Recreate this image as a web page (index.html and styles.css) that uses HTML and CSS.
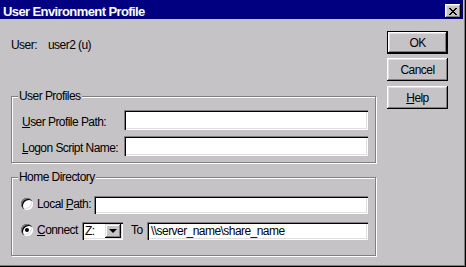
FILE: index.html
```html
<!DOCTYPE html>
<html>
<head>
<meta charset="utf-8">
<link rel="stylesheet" href="styles.css">
</head>
<body>
<div class="dialog">
  <div class="titlebar">
    <span class="title">User Environment Profile</span>
    <span class="close">
      <svg width="8" height="7" viewBox="0 0 8 7" shape-rendering="crispEdges"><path d="M0 0h2v1h-2zM6 0h2v1h-2zM1 1h2v1h-2zM5 1h2v1h-2zM2 2h4v1h-4zM3 3h2v1h-2zM2 4h4v1h-4zM1 5h2v1h-2zM5 5h2v1h-2zM0 6h2v1h-2zM6 6h2v1h-2z" fill="#000"/></svg>
    </span>
  </div>
  <div class="content">
    <div class="main">
      <div class="user-row"><span class="user-label">User:</span><span>user2 (u)</span></div>
      <div class="group g1">
        <div class="legend">User Profiles</div>
        <div class="rows rows1">
          <div class="row"><span class="lbl"><u>U</u>ser Profile Path:</span><div class="edit w1"></div></div>
          <div class="row"><span class="lbl"><u>L</u>ogon Script Name:</span><div class="edit w1"></div></div>
        </div>
      </div>
      <div class="group g2">
        <div class="legend">Home Directory</div>
        <div class="rows rows2">
          <div class="row2"><span class="radio"></span><span class="lbl2 local-lbl">Local <u>P</u>ath:</span><div class="edit short local"></div></div>
          <div class="row2"><span class="radio checked"></span><span class="lbl2 connect-lbl"><u>C</u>onnect</span><div class="combo"><span class="combo-text">Z:</span><span class="drop"></span></div><span class="to">To</span><div class="edit short share">\\server_name\share_name</div></div>
        </div>
      </div>
    </div>
    <div class="buttons">
      <div class="btn default">OK</div>
      <div class="btn">Cancel</div>
      <div class="btn help"><u>H</u>elp</div>
    </div>
  </div>
</div>
</body>
</html>
```
FILE: styles.css
```css
* { box-sizing: border-box; }
body { margin: 0; background: #c6c3c6; }
.dialog {
  width: 466px; height: 267px; background: #c6c3c6;
  padding: 0 3px 3px 0;
  box-shadow: inset -1px -1px 0 #000, inset -2px -2px 0 #808080;
  font-family: "Liberation Sans", Arial, sans-serif;
  font-size: 12px; line-height: 14px; color: #000; letter-spacing: -0.55px;
  display: flex; flex-direction: column; overflow: hidden;
}
.titlebar {
  height: 19px; background: #000080; display: flex; align-items: flex-start;
  padding: 0 2px 0 3px;
}
.title {
  flex: 1; color: #fff; font-weight: bold; font-size: 13px; line-height: 15px;
  padding-top: 4px; letter-spacing: -0.6px;
}
.close {
  width: 16px; height: 14px; margin-top: 4px; background: #c6c3c6;
  box-shadow: inset -1px -1px 0 #000, inset 1px 1px 0 #fff, inset -2px -2px 0 #808080, inset 2px 2px 0 #dfdfdf;
  display: flex; align-items: center; justify-content: center;
}
.close svg { display: block; margin-left: -1px; }
.content { display: flex; flex: 1; }
.main { width: 376px; padding: 19px 0 0 11px; }
.user-row { display: flex; height: 14px; }
.user-label { width: 37px; }
.group {
  width: 365px; border: 1px solid #808080;
  box-shadow: inset 1px 1px 0 #fff, 1px 1px 0 #fff;
  padding: 0 7px 0 10px;
}
.legend {
  width: fit-content; margin: -8px 0 0 -4px; padding: 0 1px; background: #c6c3c6;
  height: 14px; position: relative;
}
.g1 { margin-top: 44px; padding-bottom: 6px; }
.g2 { margin-top: 14px; padding-bottom: 15px; }
.rows { display: flex; flex-direction: column; }
.rows1 { margin-top: 7px; gap: 6px; }
.rows2 { margin-top: 12px; gap: 8px; }
.row { display: flex; align-items: flex-start; height: 20px; }
.row .lbl { flex: 1; margin-top: 5px; white-space: nowrap; }
.edit {
  background: #fff; height: 20px;
  box-shadow: inset 1px 1px 0 #808080, inset 2px 2px 0 #000, inset -1px -1px 0 #fff, inset -2px -2px 0 #dfdfdf;
  padding: 2px 4px; white-space: nowrap;
}
.w1 { width: 244px; }
.row2 { display: flex; align-items: center; height: 18px; }
.edit.short { height: 18px; padding: 2px 4px 0; }
.radio {
  width: 12px; height: 12px; border-radius: 50%; background: #fff; flex: none;
  box-shadow: inset 1px 1px 0 #808080, inset 2px 2px 0 #000, inset -1px -1px 0 #fff, inset -2px -2px 0 #dfdfdf;
  display: flex; align-items: center; justify-content: center; margin-left: -1px;
  margin-bottom: 3px;
}
.radio.checked::after {
  content: ""; width: 4px; height: 4px; border-radius: 50%; background: #000;
}
.lbl2 { margin-left: 4px; white-space: nowrap; margin-bottom: 2px; }
.local-lbl { width: 57px; }
.local { width: 274px; }
.connect-lbl { width: 45px; }
.combo {
  width: 41px; height: 18px; background: #fff; display: flex; align-items: center;
  box-shadow: inset 1px 1px 0 #808080, inset 2px 2px 0 #000, inset -1px -1px 0 #fff, inset -2px -2px 0 #dfdfdf;
  padding: 2px 2px 2px 3px;
}
.combo-text { flex: 1; }
.drop {
  width: 16px; height: 14px; background: #c6c3c6; position: relative;
  box-shadow: inset -1px -1px 0 #000, inset 1px 1px 0 #dfdfdf, inset -2px -2px 0 #808080, inset 2px 2px 0 #fff;
  display: flex; align-items: center; justify-content: center;
}
.drop::after {
  content: ""; width: 0; height: 0; margin-left: -1px;
  border-left: 4px solid transparent; border-right: 4px solid transparent; border-top: 4px solid #000;
}
.to { width: 16px; margin-left: 8px; margin-bottom: 2px; }
.share { width: 221px; }
.buttons { margin-left: 11px; padding-top: 12px; display: flex; flex-direction: column; gap: 4px; }
.btn {
  width: 61px; height: 23px; display: flex; align-items: center; justify-content: center;
  box-shadow: inset -1px -1px 0 #000, inset 1px 1px 0 #fff, inset -2px -2px 0 #808080, inset 2px 2px 0 #dfdfdf;
}
.btn.default {
  box-shadow: inset 0 0 0 1px #000, inset -2px -2px 0 #000, inset 2px 2px 0 #fff, inset -3px -3px 0 #808080, inset 3px 3px 0 #dfdfdf;
}
.help { margin-top: 1px; }
```
